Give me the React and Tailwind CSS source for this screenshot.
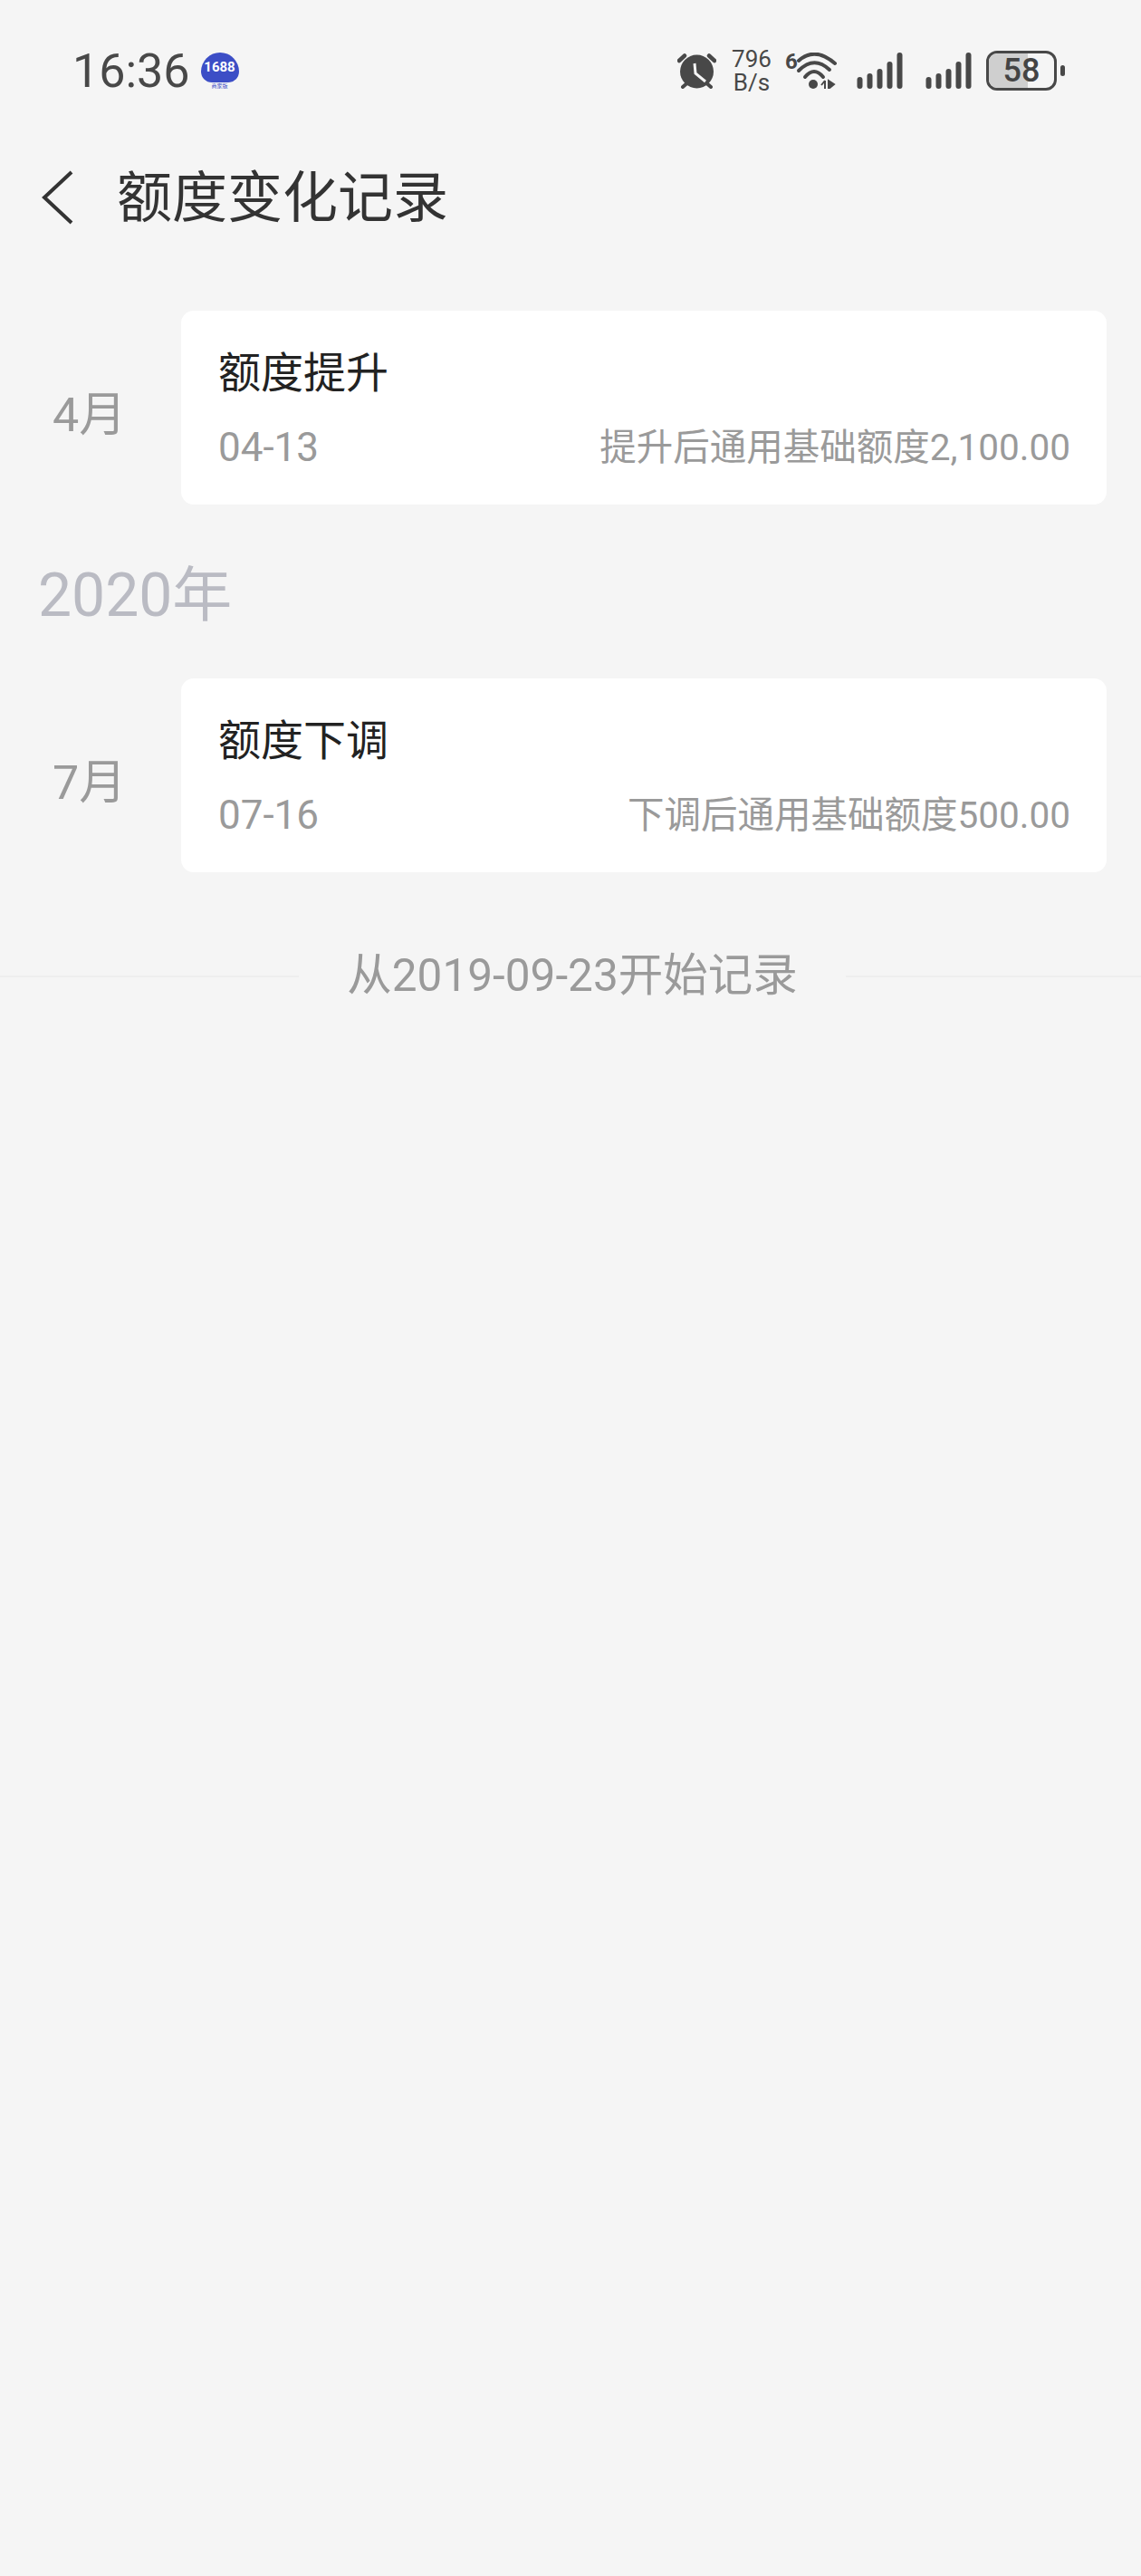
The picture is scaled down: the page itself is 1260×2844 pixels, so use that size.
const FONT = "font-['Roboto','Noto_Sans_CJK_SC',sans-serif]"

function AlarmIcon() {
  return (
    <svg width="43" height="40" viewBox="0 0 43 40" className="shrink-0">
      <circle cx="21.5" cy="21" r="18.5" fill="#484848" />
      <path d="M2 9 L8 3.5 M41 9 L35 3.5" stroke="#484848" strokeWidth="4.5" strokeLinecap="round" />
      <path d="M6 38 L10 34.5 M37 38 L33 34.5" stroke="#484848" strokeWidth="4" strokeLinecap="round" />
      <path d="M19 12 L20 23 L31 32" fill="none" stroke="#f5f5f5" strokeWidth="3" />
    </svg>
  )
}

function WifiIcon() {
  return (
    <svg width="45" height="40" viewBox="0 0 45 40" className="shrink-0">
      <g fill="none" stroke="#484848" strokeWidth="4" strokeLinecap="round">
        <path d="M3 9 Q21 -7 43 12" />
        <path d="M3 20 Q20 3 37 19" />
        <path d="M10 27 Q20 15 30 27" />
      </g>
      <circle cx="19" cy="35" r="5" fill="#484848" />
      <path d="M32 31 V40 M28 36 L32 31 M36 31 V40 L42 35 Z" stroke="#484848" strokeWidth="2" fill="#484848" />
    </svg>
  )
}

function SignalIcon() {
  return (
    <svg width="51" height="40" viewBox="0 0 51 40" className="shrink-0">
      <g fill="none" stroke="#484848" strokeWidth="6" strokeLinecap="round">
        <path d="M3.5 30 V37" />
        <path d="M14.5 26 V37" />
        <path d="M25.5 21 V37" />
        <path d="M36.5 13 V37" />
        <path d="M47.5 3 V37" />
      </g>
    </svg>
  )
}

function Battery() {
  return (
    <div className="flex items-center gap-[4px]">
      <div className="relative flex h-[44px] w-[78px] items-center justify-center overflow-hidden rounded-[12px] border-[3px] border-[#484848]">
        <div className="absolute inset-y-0 left-0 w-[43px] bg-[#cfcfcf]" />
        <span className="relative text-[36px] font-medium leading-none text-[#444]">58</span>
      </div>
      <div className="h-[12px] w-[5px] rounded-full bg-[#484848]" />
    </div>
  )
}

function StatusBar() {
  return (
    <div className="flex h-[156px] items-center pl-[80px] pr-[84px]">
      <span className="mt-[2px] text-[52px] leading-none text-[#484848]">16:36</span>
      <div className="ml-[12px] flex flex-col items-center">
        <div className="flex h-[33px] w-[42px] items-center justify-center rounded-t-[21px] rounded-b-[12px] bg-[#3c4ec6] text-[15px] font-bold leading-none text-white">
          1688
        </div>
        <span className="mt-[1px] text-[6px] leading-none text-[#3c4ec6]">商家版</span>
      </div>
      <div className="ml-auto flex items-center">
        <AlarmIcon />
        <div className="ml-[16px] flex w-[46px] flex-col items-center text-[26px] leading-[26px] text-[#484848]">
          <span>796</span>
          <span>B/s</span>
        </div>
        <div className="ml-[14px] flex items-start">
          <span className="w-[12px] text-[24px] font-bold leading-[20px] text-[#484848]">6</span>
          <WifiIcon />
        </div>
        <div className="ml-[22px]"><SignalIcon /></div>
        <div className="ml-[25px]"><SignalIcon /></div>
        <div className="ml-[16px]"><Battery /></div>
      </div>
    </div>
  )
}

function Row({ month, title, date, detail }) {
  return (
    <div className="flex h-[214px] items-stretch pr-[38px]">
      <div className="flex w-[200px] shrink-0 items-center pl-[58px] pt-[18px] text-[52px] leading-none text-[#9a9a9a]">
        {month}
      </div>
      <div className="flex flex-1 flex-col rounded-[14px] bg-white pl-[41px] pr-[40px] pt-[42px]">
        <p className="text-[47px] leading-[54px] text-[#222]">{title}</p>
        <div className="mt-[31px] flex items-center justify-between text-[40.5px] leading-[48px] text-[#9a9a9a]">
          <span className="text-[44px]">{date}</span>
          <span>{detail}</span>
        </div>
      </div>
    </div>
  )
}

export default function App() {
  return (
    <div className={`min-h-[2844px] bg-[#f5f5f5] ${FONT}`}>
      <StatusBar />

      {/* 标题栏 */}
      <div className="flex h-[124px] items-center pl-[46px]">
        <svg width="36" height="60" viewBox="0 0 36 60" className="shrink-0">
          <path d="M33 2 L3 30 L33 58" fill="none" stroke="#333" strokeWidth="4" />
        </svg>
        <h1 className="ml-[47px] mt-[2px] text-[61px] font-normal leading-none text-[#333]">额度变化记录</h1>
      </div>

      <div className="mt-[63px]">
        <Row month="4月" title="额度提升" date="04-13" detail="提升后通用基础额度2,100.00" />
        <div className="flex h-[192px] items-center pl-[42px] pt-[9px] text-[66px] leading-none text-[#babbc3]">2020年</div>
        <Row month="7月" title="额度下调" date="07-16" detail="下调后通用基础额度500.00" />
      </div>

      <div className="mt-[91px] flex h-[48px] items-center">
        <div className="h-[2px] w-[330px] bg-[#eeeeee]" />
        <span className="flex-1 text-center text-[49.5px] leading-none text-[#9a9a9a]">从2019-09-23开始记录</span>
        <div className="h-[2px] w-[326px] bg-[#eeeeee]" />
      </div>
    </div>
  )
}
